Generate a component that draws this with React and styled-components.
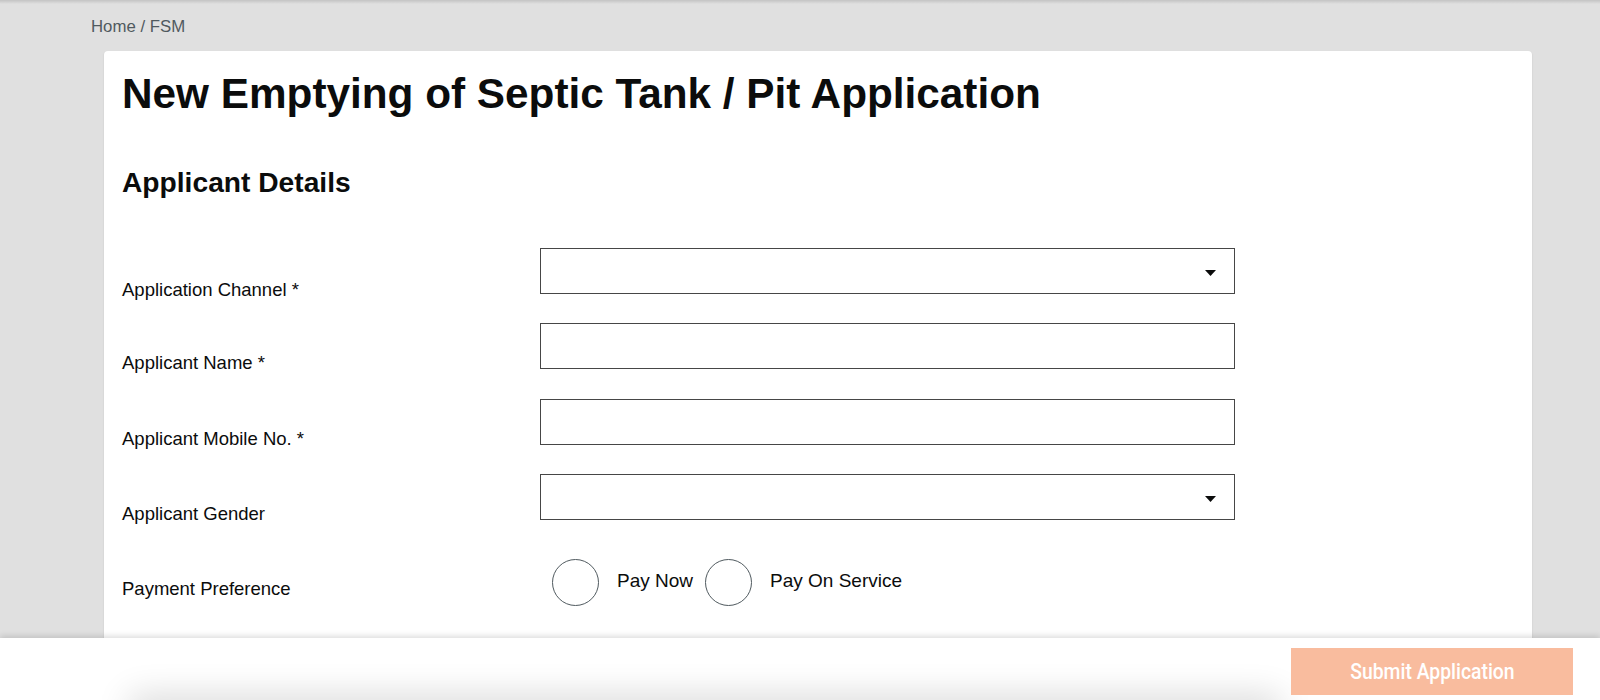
import React from 'react';
import styled, { createGlobalStyle } from 'styled-components';

const GlobalStyle = createGlobalStyle`
  html, body {
    margin: 0;
    padding: 0;
    overflow: hidden;
  }
  body {
    font-family: "Liberation Sans", Arial, sans-serif;
    color: #0b0c0c;
  }
`;

const Page = styled.div`
  background: linear-gradient(rgba(0, 0, 0, 0.13), rgba(0, 0, 0, 0) 4px), #e0e0e0;
  box-sizing: border-box;
  min-height: 100vh;
  padding: 17px 68px 0 91px;
`;

const Breadcrumb = styled.div`
  color: #505a5f;
  font-size: 16.8px;
  line-height: 20px;
`;

const Card = styled.div`
  background-color: #fff;
  border-radius: 4px;
  box-shadow: 0 1px 2px rgba(0, 0, 0, 0.12);
  margin: 14px 0 0 13px;
  padding: 19px 18px 60px;
`;

const Title = styled.h1`
  font-size: 42.3px;
  font-weight: 700;
  line-height: 48px;
  margin: 0;
`;

const SectionTitle = styled.h2`
  font-size: 28.2px;
  font-weight: 700;
  line-height: 32px;
  margin: 48px 0 0;
`;

const FieldRow = styled.div`
  align-items: end;
  display: grid;
  grid-template-columns: 418px 695px;
  margin-top: ${p => p.$gap}px;
`;

const Label = styled.label`
  font-size: 18.5px;
  line-height: 22px;
  margin-bottom: ${p => p.$drop}px;
`;

const TextInput = styled.div`
  border: 1px solid #464646;
  box-sizing: border-box;
  height: 46px;
`;

const SelectBox = styled(TextInput)`
  align-items: center;
  display: flex;
  justify-content: flex-end;
  padding: 4px 18px 0 0;
`;

const RadioGroup = styled.div`
  align-items: center;
  display: flex;
  margin-left: 12px;
`;

const RadioCircle = styled.span`
  border: 1px solid #505a5f;
  border-radius: 50%;
  box-sizing: border-box;
  height: 47px;
  width: 47px;
`;

const RadioText = styled.span`
  font-size: 19px;
  margin: -2px 12px 0 18px;
`;

const ActionBar = styled.div`
  background-color: #fff;
  bottom: 0;
  box-shadow: 0 -2px 6px rgba(0, 0, 0, 0.14);
  box-sizing: border-box;
  display: flex;
  height: 62px;
  justify-content: flex-end;
  left: 0;
  overflow: hidden;
  padding: 10px 27px 0;
  position: fixed;
  right: 0;
`;

const BarShade = styled.div`
  bottom: -30px;
  box-shadow: 0 -4px 34px rgba(0, 0, 0, 0.16);
  height: 30px;
  left: 130px;
  position: absolute;
  right: 320px;
`;

const SubmitButton = styled.button`
  background-color: #f9bc9e;
  border: none;
  color: #fff;
  cursor: not-allowed;
  font-family: Roboto, "Liberation Sans", sans-serif;
  font-size: 22px;
  font-weight: 500;
  height: 47px;
  position: relative;
  width: 282px;

  span {
    display: inline-block;
    transform: scaleX(0.88);
  }
`;

const Arrow = () => (
  <svg width="11" height="6" viewBox="0 0 11 6">
    <path d="M0 0h11L5.5 6z" fill="#0b0c0c" />
  </svg>
);

const fields = [
  { label: 'Application Channel *', select: true, drop: -7, gap: 49.5 },
  { label: 'Applicant Name *', drop: -5, gap: 29.5 },
  { label: 'Applicant Mobile No. *', drop: -5, gap: 29.5 },
  { label: 'Applicant Gender', select: true, drop: -5, gap: 29.5 },
];

const App = () => (
  <>
    <GlobalStyle />
    <Page>
      <Breadcrumb>Home / FSM</Breadcrumb>
      <Card>
        <Title>New Emptying of Septic Tank / Pit Application</Title>
        <SectionTitle>Applicant Details</SectionTitle>
        {fields.map(field => (
          <FieldRow key={field.label} $gap={field.gap}>
            <Label $drop={field.drop}>{field.label}</Label>
            {field.select ? <SelectBox><Arrow /></SelectBox> : <TextInput />}
          </FieldRow>
        ))}
        <FieldRow $gap={38.5}>
          <Label $drop={6}>Payment Preference</Label>
          <RadioGroup>
            <RadioCircle />
            <RadioText>Pay Now</RadioText>
            <RadioCircle />
            <RadioText>Pay On Service</RadioText>
          </RadioGroup>
        </FieldRow>
      </Card>
    </Page>
    <ActionBar>
      <BarShade />
      <SubmitButton disabled>
        <span>Submit Application</span>
      </SubmitButton>
    </ActionBar>
  </>
);

export default App;
